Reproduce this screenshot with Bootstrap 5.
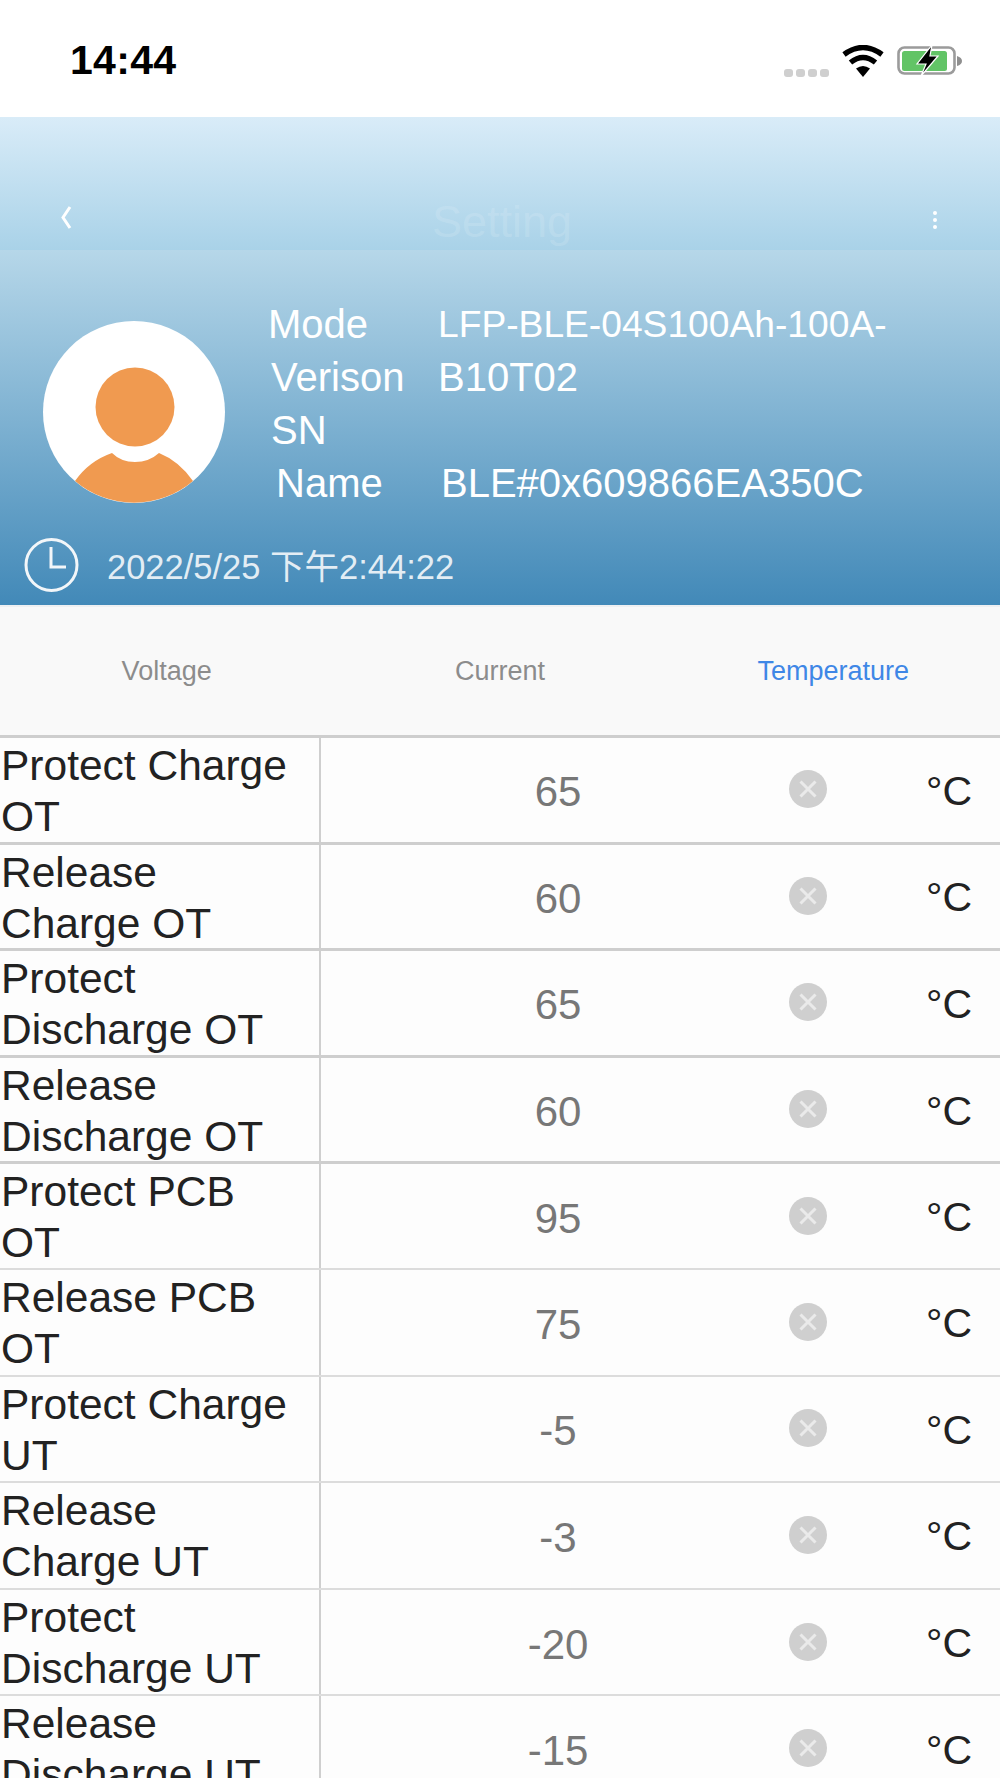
<!DOCTYPE html>
<html lang="en">
<head>
<meta charset="utf-8">
<title>Setting</title>
<link href="https://cdn.jsdelivr.net/npm/bootstrap@5.3.0/dist/css/bootstrap.min.css" rel="stylesheet">
<style>
html,body{margin:0;background:#fff;}
body{font-family:"Liberation Sans","Noto Sans CJK SC",sans-serif;}
.screen{width:1000px;height:1778px;overflow:hidden;background:#fdfdfd;}
.statusbar{height:117px;background:#fff;padding:0 38px 0 70px;}
.clock-txt{font-size:41px;font-weight:700;color:#000;line-height:1;margin-top:4px;letter-spacing:.3px;}
.status-ics{margin-top:5px;}
.sig-dot{width:9px;height:8px;border-radius:3px;background:#cfcfcf;}
.sig-row{gap:3px;margin-top:24px;margin-right:13px;}
.wifi-ic{width:42px;height:32px;margin-right:13px;}
.batt-ic{width:65px;height:32px;}
.navzone{height:133px;background:linear-gradient(#d9ecf8,#a9d2e8);padding:0 62px 0 60px;}
.navttl{font-size:45px;color:rgba(255,255,255,.14);line-height:1;margin-bottom:-10px;}
.infozone{height:355px;background:linear-gradient(#b6d7e9,#4289b8);}
.avatar-wrap{padding:71px 0 0 43px;width:268px;flex:none;}
.info-list{padding-top:48px;color:#fff;font-size:40px;line-height:53px;}
.info-lbl{width:170px;flex:none;}
.shift-a{padding-left:3px;width:170px;}
.shift-b{padding-left:8px;width:173px;}
.info-fit{font-size:37.2px;}
.timeline{height:70px;padding-left:24px;padding-top:2px;}
.date-txt{font-size:34.5px;color:rgba(255,255,255,.85);margin-left:28px;margin-top:5px;}
.infobody{height:285px;}
.tabs-bar{height:130px;background:#f9f9f9;border-top:2px solid #eef0f2;}
.tab-it{flex:1 1 0;text-align:center;font-size:27px;color:#8c8c8c;}
.tab-on{color:#3f87e6;}
.data-row{height:106.6px;border-top:3px solid #cecece;}
.data-row.lite{border-top:2px solid #dcdcdc;}
.data-lbl{width:321px;flex:none;border-right:2px solid #cfcfcf;font-size:42.5px;line-height:51px;color:#222;padding:2px 0 0 1px;white-space:nowrap;overflow:hidden;}
.data-val{width:474px;flex:none;text-align:center;font-size:42px;color:#777;padding-top:4px;}
.x-ic{width:38px;height:38px;flex:none;margin-left:-6px;margin-top:-1px;}
.data-unit{font-size:41px;color:#222;margin-left:99px;line-height:1;margin-top:3px;}
</style>
</head>
<body>
<div class="screen">
  <div class="statusbar d-flex align-items-center justify-content-between">
    <div class="clock-txt">14:44</div>
    <div class="status-ics d-flex align-items-center">
      <div class="sig-row d-flex"><span class="sig-dot"></span><span class="sig-dot"></span><span class="sig-dot"></span><span class="sig-dot"></span></div>
      <svg class="wifi-ic" viewBox="0 0 42 32"><path d="M21 32 L14 23.5 Q21 18.5 28 23.5Z" fill="#000"/><path d="M8.5 17.5 Q21 7.5 33.5 17.5" fill="none" stroke="#000" stroke-width="5.4"/><path d="M2 9.5 Q21 -4.5 40 9.5" fill="none" stroke="#000" stroke-width="5.4"/></svg>
      <svg class="batt-ic" viewBox="0 0 65 32"><rect x="1.5" y="2.5" width="56" height="26" rx="6" fill="#fff" stroke="#9b9b9b" stroke-width="2.6"/><rect x="5" y="6" width="45" height="20" rx="2.5" fill="#62c466"/><path d="M60 11 Q65 12.5 65 16 Q65 19.5 60 21Z" fill="#8f8f8f"/><path d="M35 0 L20 19 H29 L24 31 L41 11 H33Z" fill="#000" stroke="#fff" stroke-width="1.2"/></svg>
    </div>
  </div>

  <div class="navzone d-flex align-items-end justify-content-between pb-3">
    <svg width="12" height="25" viewBox="0 0 12 25" class="mb-1"><path d="M10 2 L3 12.5 L10 23" fill="none" stroke="#fff" stroke-width="3"/></svg>
    <div class="navttl">Setting</div>
    <svg width="6" height="20" viewBox="0 0 6 20" class="mb-1"><circle cx="3" cy="3" r="2" fill="#fff"/><circle cx="3" cy="10" r="2" fill="#fff"/><circle cx="3" cy="17" r="2" fill="#fff"/></svg>
  </div>

  <div class="infozone">
    <div class="infobody d-flex">
      <div class="avatar-wrap">
        <svg width="182" height="182" viewBox="0 0 182 182"><circle cx="91" cy="91" r="91" fill="#fff"/><circle cx="92" cy="86" r="39.5" fill="#f09a50"/><path d="M32 160 Q46 140 69 132 Q78 141 92 141 Q106 141 116 132 Q136 140 150 160 A91 91 0 0 1 32 160Z" fill="#f09a50"/></svg>
      </div>
      <div class="info-list">
        <div class="d-flex"><span class="info-lbl">Mode</span><span class="info-fit">LFP-BLE-04S100Ah-100A-</span></div>
        <div class="d-flex"><span class="info-lbl shift-a">Verison</span><span>B10T02</span></div>
        <div class="d-flex"><span class="info-lbl shift-a">SN</span></div>
        <div class="d-flex"><span class="info-lbl shift-b">Name</span><span>BLE#0x609866EA350C</span></div>
      </div>
    </div>
    <div class="timeline d-flex align-items-start">
      <svg width="55" height="56" viewBox="0 0 55 56"><circle cx="27.5" cy="28" r="25.5" fill="none" stroke="#f2f6f9" stroke-width="3"/><path d="M27 10 V30 H42" fill="none" stroke="#f2f6f9" stroke-width="3"/></svg>
      <div class="date-txt">2022/5/25 下午2:44:22</div>
    </div>
  </div>

  <div class="tabs-bar d-flex align-items-center">
    <div class="tab-it">Voltage</div>
    <div class="tab-it">Current</div>
    <div class="tab-it tab-on">Temperature</div>
  </div>

  <div class="data-row d-flex align-items-center"><div class="data-lbl align-self-stretch">Protect Charge<br>OT</div><div class="data-val">65</div><svg class="x-ic" viewBox="0 0 38 38"><circle cx="19" cy="19" r="19" fill="#cfcfcf"/><path d="M11.5 11.5 L26.5 26.5 M26.5 11.5 L11.5 26.5" stroke="#eaeaea" stroke-width="3"/></svg><div class="data-unit">°C</div></div>
  <div class="data-row d-flex align-items-center"><div class="data-lbl align-self-stretch">Release<br>Charge OT</div><div class="data-val">60</div><svg class="x-ic" viewBox="0 0 38 38"><circle cx="19" cy="19" r="19" fill="#cfcfcf"/><path d="M11.5 11.5 L26.5 26.5 M26.5 11.5 L11.5 26.5" stroke="#eaeaea" stroke-width="3"/></svg><div class="data-unit">°C</div></div>
  <div class="data-row d-flex align-items-center"><div class="data-lbl align-self-stretch">Protect<br>Discharge OT</div><div class="data-val">65</div><svg class="x-ic" viewBox="0 0 38 38"><circle cx="19" cy="19" r="19" fill="#cfcfcf"/><path d="M11.5 11.5 L26.5 26.5 M26.5 11.5 L11.5 26.5" stroke="#eaeaea" stroke-width="3"/></svg><div class="data-unit">°C</div></div>
  <div class="data-row d-flex align-items-center"><div class="data-lbl align-self-stretch">Release<br>Discharge OT</div><div class="data-val">60</div><svg class="x-ic" viewBox="0 0 38 38"><circle cx="19" cy="19" r="19" fill="#cfcfcf"/><path d="M11.5 11.5 L26.5 26.5 M26.5 11.5 L11.5 26.5" stroke="#eaeaea" stroke-width="3"/></svg><div class="data-unit">°C</div></div>
  <div class="data-row d-flex align-items-center"><div class="data-lbl align-self-stretch">Protect PCB<br>OT</div><div class="data-val">95</div><svg class="x-ic" viewBox="0 0 38 38"><circle cx="19" cy="19" r="19" fill="#cfcfcf"/><path d="M11.5 11.5 L26.5 26.5 M26.5 11.5 L11.5 26.5" stroke="#eaeaea" stroke-width="3"/></svg><div class="data-unit">°C</div></div>
  <div class="data-row lite d-flex align-items-center"><div class="data-lbl align-self-stretch">Release PCB<br>OT</div><div class="data-val">75</div><svg class="x-ic" viewBox="0 0 38 38"><circle cx="19" cy="19" r="19" fill="#cfcfcf"/><path d="M11.5 11.5 L26.5 26.5 M26.5 11.5 L11.5 26.5" stroke="#eaeaea" stroke-width="3"/></svg><div class="data-unit">°C</div></div>
  <div class="data-row lite d-flex align-items-center"><div class="data-lbl align-self-stretch">Protect Charge<br>UT</div><div class="data-val">-5</div><svg class="x-ic" viewBox="0 0 38 38"><circle cx="19" cy="19" r="19" fill="#cfcfcf"/><path d="M11.5 11.5 L26.5 26.5 M26.5 11.5 L11.5 26.5" stroke="#eaeaea" stroke-width="3"/></svg><div class="data-unit">°C</div></div>
  <div class="data-row lite d-flex align-items-center"><div class="data-lbl align-self-stretch">Release<br>Charge UT</div><div class="data-val">-3</div><svg class="x-ic" viewBox="0 0 38 38"><circle cx="19" cy="19" r="19" fill="#cfcfcf"/><path d="M11.5 11.5 L26.5 26.5 M26.5 11.5 L11.5 26.5" stroke="#eaeaea" stroke-width="3"/></svg><div class="data-unit">°C</div></div>
  <div class="data-row lite d-flex align-items-center"><div class="data-lbl align-self-stretch">Protect<br>Discharge UT</div><div class="data-val">-20</div><svg class="x-ic" viewBox="0 0 38 38"><circle cx="19" cy="19" r="19" fill="#cfcfcf"/><path d="M11.5 11.5 L26.5 26.5 M26.5 11.5 L11.5 26.5" stroke="#eaeaea" stroke-width="3"/></svg><div class="data-unit">°C</div></div>
  <div class="data-row lite d-flex align-items-center"><div class="data-lbl align-self-stretch">Release<br>Discharge UT</div><div class="data-val">-15</div><svg class="x-ic" viewBox="0 0 38 38"><circle cx="19" cy="19" r="19" fill="#cfcfcf"/><path d="M11.5 11.5 L26.5 26.5 M26.5 11.5 L11.5 26.5" stroke="#eaeaea" stroke-width="3"/></svg><div class="data-unit">°C</div></div>
</div>
<script src="https://cdn.jsdelivr.net/npm/bootstrap@5.3.0/dist/js/bootstrap.bundle.min.js"></script>
</body>
</html>
